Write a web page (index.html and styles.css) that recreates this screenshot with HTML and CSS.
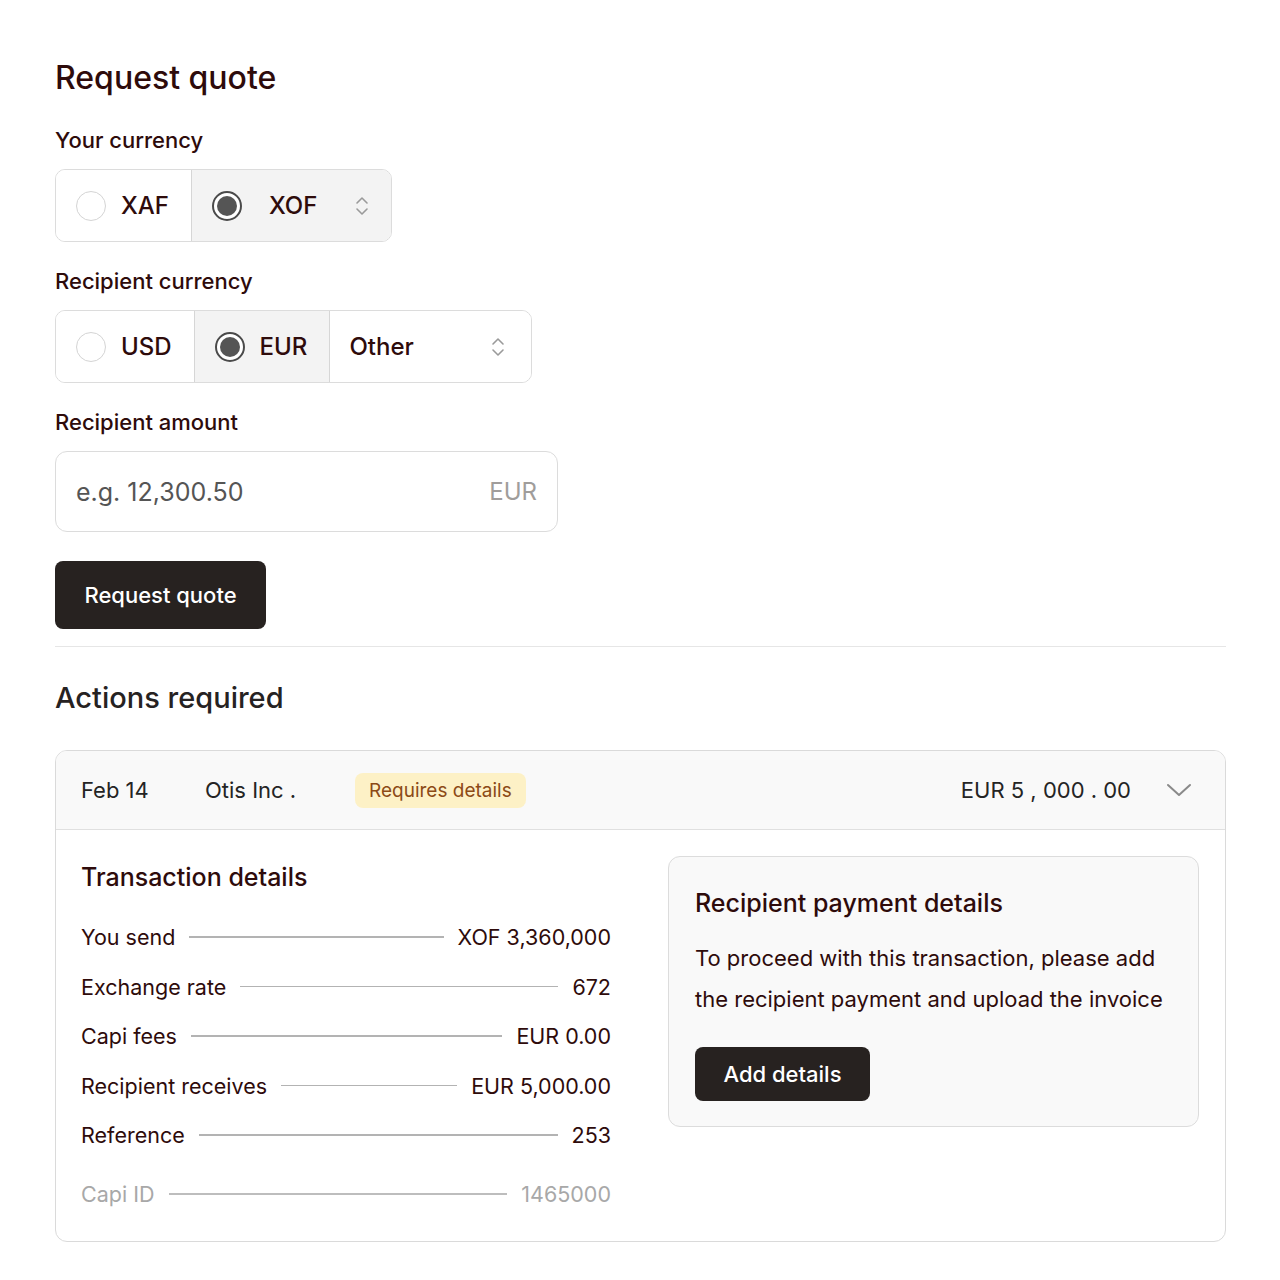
FILE: index.html
```html
<!DOCTYPE html>
<html lang="en">

<head>
  <meta charset="UTF-8">
  <meta name="viewport" content="width=device-width, initial-scale=1.0">
  <title>Request quote</title>
  <link rel="stylesheet" href="styles.css">
</head>

<body>
  <div id="page">
    <h1 class="title">Request quote</h1>

    <div class="label">Your currency</div>
    <div class="segments">
      <div class="segment">
        <span class="radio"></span>
        <span class="seg-text">XAF</span>
      </div>
      <div class="segment active">
        <span class="radio checked"></span>
        <span class="seg-text select-text">XOF</span>
        <svg class="updown" width="14" height="24" viewBox="0 0 14 24">
          <path d="M2 9 L7 4 L12 9 M2 15 L7 20 L12 15" fill="none" stroke="#9a9a9a" stroke-width="1.6" stroke-linecap="round" stroke-linejoin="round"/>
        </svg>
      </div>
    </div>

    <div class="label">Recipient currency</div>
    <div class="segments">
      <div class="segment">
        <span class="radio"></span>
        <span class="seg-text">USD</span>
      </div>
      <div class="segment active">
        <span class="radio checked"></span>
        <span class="seg-text">EUR</span>
      </div>
      <div class="segment other">
        <span class="seg-text">Other</span>
        <svg class="updown" width="14" height="24" viewBox="0 0 14 24">
          <path d="M2 9 L7 4 L12 9 M2 15 L7 20 L12 15" fill="none" stroke="#9a9a9a" stroke-width="1.6" stroke-linecap="round" stroke-linejoin="round"/>
        </svg>
      </div>
    </div>

    <div class="label">Recipient amount</div>
    <div class="amount-input">
      <span class="placeholder">e.g. 12,300.50</span>
      <span class="suffix">EUR</span>
    </div>

    <button class="btn btn-quote">Request quote</button>

    <hr class="divider">

    <h2 class="section-title">Actions required</h2>

    <div class="card">
      <div class="card-head">
        <span class="date">Feb 14</span>
        <span class="company">Otis Inc .</span>
        <span class="badge">Requires details</span>
        <span class="amount">EUR 5 , 000 . 00</span>
        <svg class="chevron" width="26" height="14" viewBox="0 0 26 14">
          <path d="M2 2 L13 12 L24 2" fill="none" stroke="#8a8a8a" stroke-width="2" stroke-linecap="round" stroke-linejoin="round"/>
        </svg>
      </div>

      <div class="card-body">
        <div class="details">
          <h3 class="sub-title">Transaction details</h3>
          <div class="row"><span>You send</span><span class="line"></span><span>XOF 3,360,000</span></div>
          <div class="row"><span>Exchange rate</span><span class="line"></span><span>672</span></div>
          <div class="row"><span>Capi fees</span><span class="line"></span><span>EUR 0.00</span></div>
          <div class="row"><span>Recipient receives</span><span class="line"></span><span>EUR 5,000.00</span></div>
          <div class="row"><span>Reference</span><span class="line"></span><span>253</span></div>
          <div class="row muted"><span>Capi ID</span><span class="line"></span><span>1465000</span></div>
        </div>

        <div class="notice">
          <h3 class="sub-title">Recipient payment details</h3>
          <p class="notice-text">To proceed with this transaction, please add the recipient payment and upload the invoice</p>
          <button class="btn btn-small">Add details</button>
        </div>
      </div>
    </div>
  </div>
</body>

</html>
```

FILE: styles.css
```css
body {
  margin: 0;
  padding: 0;
  background-color: #ffffff;
  color: #2e0b0b;
  font-family: Inter, "Noto Sans", sans-serif;
}

#page {
  width: 1171px;
  padding: 58px 0 40px 55px;
}

.title {
  font-size: 32px;
  line-height: 40px;
  font-weight: 500;
  margin: 0 0 28px 0;
}

.label {
  font-size: 22px;
  line-height: 28px;
  font-weight: 500;
  margin-bottom: 15px;
}

/* segmented radio groups */
.segments {
  display: inline-flex;
  border: 1.5px solid #dcdcdc;
  border-radius: 10px;
  overflow: hidden;
  height: 71px;
  margin-bottom: 25px;
}

.segment {
  display: flex;
  align-items: center;
  gap: 15px;
  padding: 0 22px 0 20px;
  background-color: #ffffff;
}

.segment + .segment {
  border-left: 1.5px solid #d6d6d6;
}

.segment.active {
  background-color: #f3f3f3;
}

.segment.other {
  padding: 0 26px 0 19px;
  width: 156px;
  justify-content: space-between;
}

.seg-text {
  font-size: 24px;
  font-weight: 500;
}

.select-text {
  margin-left: 12px;
  margin-right: 23px;
}

.radio {
  width: 30px;
  height: 30px;
  border: 1.5px solid #d4d4d4;
  border-radius: 50%;
  background-color: #fff;
  box-sizing: border-box;
}

.radio.checked {
  border: 2px solid #4a4a4a;
  position: relative;
}

.radio.checked::after {
  content: "";
  position: absolute;
  top: 3px;
  left: 3px;
  width: 20px;
  height: 20px;
  border-radius: 50%;
  background-color: #555555;
}

.updown {
  display: block;
}

/* amount input */
.amount-input {
  width: 503px;
  height: 81px;
  box-sizing: border-box;
  border: 1.5px solid #dcdcdc;
  border-radius: 12px;
  display: flex;
  align-items: center;
  justify-content: space-between;
  padding: 0 20px;
  margin-bottom: 29px;
}

.placeholder {
  font-size: 25px;
  color: #555555;
}

.suffix {
  font-size: 24px;
  color: #a09d9b;
}

.btn {
  display: block;
  border: none;
  background-color: #272220;
  color: #ffffff;
  font-family: inherit;
  font-weight: 500;
  cursor: pointer;
}

.btn-quote {
  width: 211px;
  height: 68px;
  font-size: 22px;
  border-radius: 8px;
}

.divider {
  border: none;
  border-top: 1.5px solid #e6e6e6;
  margin: 17px 0 31px 0;
}

.section-title {
  font-size: 29px;
  line-height: 40px;
  font-weight: 500;
  color: #262222;
  margin: 0 0 32px 0;
}

/* action card */
.card {
  border: 1.5px solid #dadada;
  border-radius: 12px;
  overflow: hidden;
}

.card-head {
  display: flex;
  align-items: center;
  height: 78px;
  padding: 0 33px 0 25px;
  background-color: #f9f9f9;
  border-bottom: 1.5px solid #e0e0e0;
  font-size: 22px;
  color: #242424;
}

.date {
  width: 124px;
}

.company {
  width: 150px;
}

.badge {
  background-color: #fdf1c6;
  color: #8c4a16;
  font-size: 19px;
  padding: 6px 14px;
  border-radius: 8px;
}

.amount {
  margin-left: auto;
  margin-right: 35px;
}

.chevron {
  display: block;
}

.card-body {
  display: grid;
  grid-template-columns: 530px 531px;
  gap: 57px;
  padding: 26px 25px 32px 25px;
}

.sub-title {
  font-size: 25px;
  line-height: 32px;
  font-weight: 500;
  margin: 0;
}

.details .sub-title {
  margin: 5px 0 29px 0;
}

.row {
  display: flex;
  align-items: center;
  font-size: 21.5px;
  line-height: 30px;
  margin-bottom: 19.5px;
}

.row .line {
  flex: 1;
  height: 1.5px;
  background-color: #b3b3b3;
  margin: 0 14px;
}

.row.muted {
  color: #a8a8a8;
  margin-top: 29px;
  margin-bottom: 0;
}

.row.muted .line {
  background-color: #bdbdbd;
}

.notice {
  align-self: start;
  background-color: #f9f9f9;
  border: 1.5px solid #dcdcdc;
  border-radius: 12px;
  padding: 30px 26px 25px 26px;
}

.notice-text {
  font-size: 22px;
  line-height: 41px;
  margin: 19px 0 27px 0;
}

.btn-small {
  width: 175px;
  height: 54px;
  font-size: 22px;
  border-radius: 8px;
}
```
